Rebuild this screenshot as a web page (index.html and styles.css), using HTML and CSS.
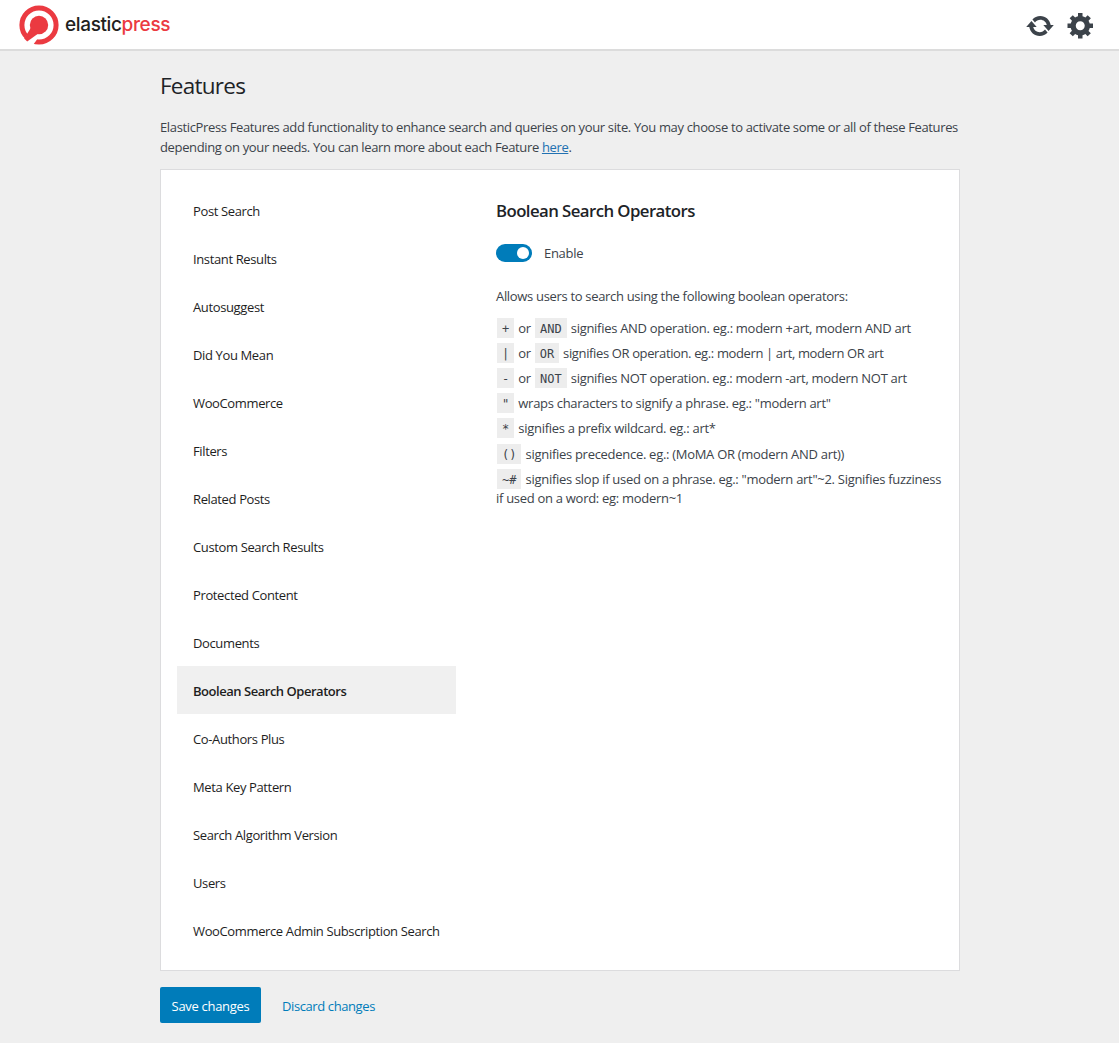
FILE: index.html
```html
<!DOCTYPE html>
<html lang="en">
<head>
<meta charset="utf-8">
<title>ElasticPress Features</title>
<link rel="stylesheet" href="styles.css">
</head>
<body>
<header class="topbar">
  <div class="brand">
    <svg class="brand-mark" viewBox="0 0 40 40" aria-hidden="true">
      <circle cx="20" cy="20" r="17.1" fill="none" stroke="#eb3a41" stroke-width="5"/>
      <path d="M4 36L14 40L22 29L14 21Z" fill="#fff"/>
      <path d="M13 21L20 28L8.2 36.4L5.2 33.4Z" fill="#eb3a41"/>
      <circle cx="20" cy="20" r="9.2" fill="#eb3a41"/>
    </svg>
    <span class="brand-name">elastic<span class="brand-accent">press</span></span>
  </div>
  <nav class="tools">
    <svg class="tool" viewBox="0 0 20 20"><path d="M10.2 3.28c3.53 0 6.43 2.61 6.92 6h2.08l-3.5 4-3.5-4h2.32c-.45-1.97-2.21-3.45-4.32-3.45-1.45 0-2.73.71-3.54 1.78L4.95 5.66C6.23 4.2 8.11 3.28 10.2 3.28zm-.4 13.44c-3.52 0-6.43-2.61-6.92-6H.8l3.5-4c1.17 1.33 2.33 2.67 3.5 4H5.48c.45 1.97 2.21 3.45 4.32 3.45 1.45 0 2.73-.71 3.54-1.78l1.71 1.95c-1.28 1.46-3.15 2.38-5.25 2.38z"/></svg>
    <svg class="tool" viewBox="0 0 20 20"><path d="M18 12h-2.18c-.17.7-.44 1.35-.81 1.93l1.54 1.54-2.1 2.1-1.54-1.54c-.58.36-1.23.63-1.91.79V19H8v-2.18c-.68-.16-1.33-.43-1.91-.79l-1.54 1.54-2.12-2.12 1.54-1.54c-.36-.58-.63-1.23-.79-1.91H1V9.03h2.17c.16-.7.44-1.35.8-1.94L2.43 5.55l2.1-2.1 1.54 1.54c.58-.37 1.24-.64 1.93-.81V2h3v2.18c.68.16 1.33.43 1.91.79l1.54-1.54 2.12 2.12-1.54 1.54c.36.59.64 1.24.8 1.94H18V12zm-8.5 1.5c1.66 0 3-1.34 3-3s-1.34-3-3-3-3 1.34-3 3 1.34 3 3 3z"/></svg>
  </nav>
</header>
<main class="page">
  <h1 class="title">Features</h1>
  <p class="intro">ElasticPress Features add functionality to enhance search and queries on your site. You may choose to activate some or all of these Features<br>depending on your needs. You can learn more about each Feature <a href="#">here</a>.</p>
  <section class="panel">
    <ul class="tabs">
      <li class="tab">Post Search</li>
      <li class="tab">Instant Results</li>
      <li class="tab">Autosuggest</li>
      <li class="tab">Did You Mean</li>
      <li class="tab">WooCommerce</li>
      <li class="tab">Filters</li>
      <li class="tab">Related Posts</li>
      <li class="tab">Custom Search Results</li>
      <li class="tab">Protected Content</li>
      <li class="tab">Documents</li>
      <li class="tab active">Boolean Search Operators</li>
      <li class="tab">Co-Authors Plus</li>
      <li class="tab">Meta Key Pattern</li>
      <li class="tab">Search Algorithm Version</li>
      <li class="tab">Users</li>
      <li class="tab">WooCommerce Admin Subscription Search</li>
    </ul>
    <div class="feature">
      <h2 class="feature-title">Boolean Search Operators</h2>
      <div class="toggle-row"><span class="toggle"></span><span>Enable</span></div>
      <p class="lead">Allows users to search using the following boolean operators:</p>
      <ul class="operators">
        <li><code>+</code> or <code>AND</code> signifies AND operation. eg.: modern +art, modern AND art</li>
        <li class="tight"><code>|</code> or <code>OR</code> signifies OR operation. eg.: modern | art, modern OR art</li>
        <li><code>-</code> or <code>NOT</code> signifies NOT operation. eg.: modern -art, modern NOT art</li>
        <li><code>"</code> wraps characters to signify a phrase. eg.: "modern art"</li>
        <li class="spaced"><code>*</code> signifies a prefix wildcard. eg.: art*</li>
        <li><code>()</code> signifies precedence. eg.: (MoMA OR (modern AND art))</li>
        <li class="wrapped"><code>~#</code> signifies slop if used on a phrase. eg.: "modern art"~2. Signifies fuzziness<br>if used on a word: eg: modern~1</li>
      </ul>
    </div>
  </section>
  <div class="actions">
    <button class="save">Save changes</button>
    <a class="discard" href="#">Discard changes</a>
  </div>
</main>
</body>
</html>
```
FILE: styles.css
```css
* { box-sizing: border-box; }
body {
  margin: 0;
  min-height: 1043px;
  background: #efefef;
  color: #3c434a;
  font: 13px/20px "Open Sans", "Noto Sans", sans-serif;
  letter-spacing: -0.3px;
  white-space: nowrap;
}
ul { list-style: none; margin: 0; padding: 0; }
h1, h2, p { margin: 0; }
.topbar {
  display: flex;
  justify-content: space-between;
  height: 51px;
  padding: 4px 23px 0 18.5px;
  background: #fff;
  border-bottom: 2px solid #dcdcdc;
}
.brand { display: flex; gap: 6.5px; }
.brand-mark { width: 40px; height: 40px; margin-top: 0.5px; }
.brand-name {
  font: 450 19px/42px Inter, sans-serif;
  letter-spacing: -0.37px;
  color: #231f20;
}
.brand-accent { color: #eb3a41; }
.tools { display: flex; gap: 11px; padding-top: 6px; }
.tool { width: 30px; height: 30px; fill: #3c434a; }
.tool:first-child { margin: 1px 0 0 -1px; }
.page { width: 800px; margin: 0 auto 0 160px; padding-top: 20px; }
.title { font-size: 22.5px; line-height: 30px; font-weight: 400; letter-spacing: -0.75px; color: #1d2327; }
.intro { margin-top: 16px; height: 52px; letter-spacing: -0.355px; }
.intro a { color: #2271b1; }
.panel {
  display: flex;
  gap: 40px;
  height: 802px;
  padding: 16px;
  background: #fff;
  border: 1px solid #dcdcde;
}
.tabs { width: 279px; }
.tab { height: 48px; padding: 0 16px; line-height: 51px; letter-spacing: -0.37px; color: #1e1e1e; }
.active { background: #f0f0f0; font-weight: 600; letter-spacing: -0.47px; }
.feature-title {
  margin-top: 14px;
  font-size: 16.8px;
  line-height: 22px;
  font-weight: 600;
  letter-spacing: -0.57px;
  color: #1d2327;
}
.toggle-row { display: flex; align-items: center; gap: 12px; margin-top: 21px; }
.toggle {
  display: flex;
  justify-content: flex-end;
  align-items: center;
  width: 36px;
  height: 18px;
  padding: 3px;
  border-radius: 9px;
  background: #007cba;
}
.toggle::after { content: ""; width: 12px; height: 12px; border-radius: 50%; background: #fff; }
.lead { margin-top: 23px; margin-bottom: 12px; letter-spacing: -0.32px; }
.operators { letter-spacing: -0.29px; }
.operators li { line-height: 20px; min-height: 25px; }
.operators .tight { letter-spacing: -0.37px; }
.operators .spaced { min-height: 26px; }
.operators .wrapped { padding-top: 1px; line-height: 19px; }
.operators code {
  display: inline-block;
  height: 20px;
  margin: 0 1px;
  padding: 0 5px;
  background: #ededed;
  font: 12px/22px "DejaVu Sans Mono", monospace;
  letter-spacing: 0;
  vertical-align: top;
}
.operators .wrapped code { margin-top: -1px; }
.actions { display: flex; align-items: center; gap: 20px; margin-top: 16px; }
.save {
  width: 101px;
  height: 36px;
  padding: 2px 0 0;
  border: 0;
  border-radius: 2px;
  background: #007cba;
  color: #fff;
  font: inherit;
  letter-spacing: inherit;
}
.discard { color: #007cba; text-decoration: none; padding: 2px 0 0 1px; letter-spacing: -0.4px; }
```
